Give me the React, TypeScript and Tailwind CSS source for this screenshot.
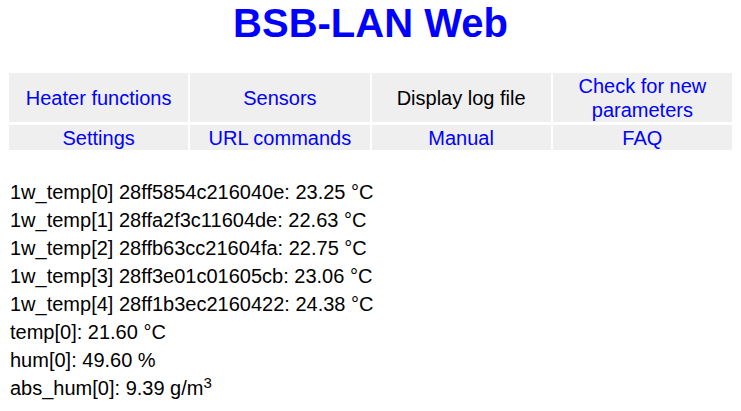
const menu = [
  [
    { label: 'Heater functions', link: true },
    { label: 'Sensors', link: true },
    { label: 'Display log file', link: false },
    { label: 'Check for new parameters', link: true },
  ],
  [
    { label: 'Settings', link: true },
    { label: 'URL commands', link: true },
    { label: 'Manual', link: true },
    { label: 'FAQ', link: true },
  ],
];

const sensors = [
  '1w_temp[0] 28ff5854c216040e: 23.25 °C',
  '1w_temp[1] 28ffa2f3c11604de: 22.63 °C',
  '1w_temp[2] 28ffb63cc21604fa: 22.75 °C',
  '1w_temp[3] 28ff3e01c01605cb: 23.06 °C',
  '1w_temp[4] 28ff1b3ec2160422: 24.38 °C',
  'temp[0]: 21.60 °C',
  'hum[0]: 49.60 %',
];

export default function App() {
  return (
    <div className="w-[741px] h-[411px] bg-white font-['Liberation_Sans',Arial,sans-serif] text-black">
      <h1 className="text-center text-[40px] leading-[46px] font-bold text-[#0000ff]">BSB-LAN Web</h1>

      <div className="mt-[27px] mx-[9px] flex flex-col gap-[3px]">
        {menu.map((row, i) => (
          <div key={i} className={`grid grid-cols-4 gap-[2px] ${i === 0 ? 'h-[49px]' : 'h-[25px]'}`}>
            {row.map((c) => (
              <div
                key={c.label}
                className={`flex items-center justify-center bg-[#efefef] text-center text-[20px] leading-[24px] ${
                  c.link ? 'text-[#0000ff]' : 'text-black'
                }`}
              >
                <span className="px-2">{c.label}</span>
              </div>
            ))}
          </div>
        ))}
      </div>

      <div className="mt-[28px] pl-[10px] text-[20px] leading-[28px]">
        {sensors.map((s) => (
          <div key={s}>{s}</div>
        ))}
        <div>
          abs_hum[0]: 9.39 g/m<sup className="text-[15px]">3</sup>
        </div>
      </div>
    </div>
  );
}
